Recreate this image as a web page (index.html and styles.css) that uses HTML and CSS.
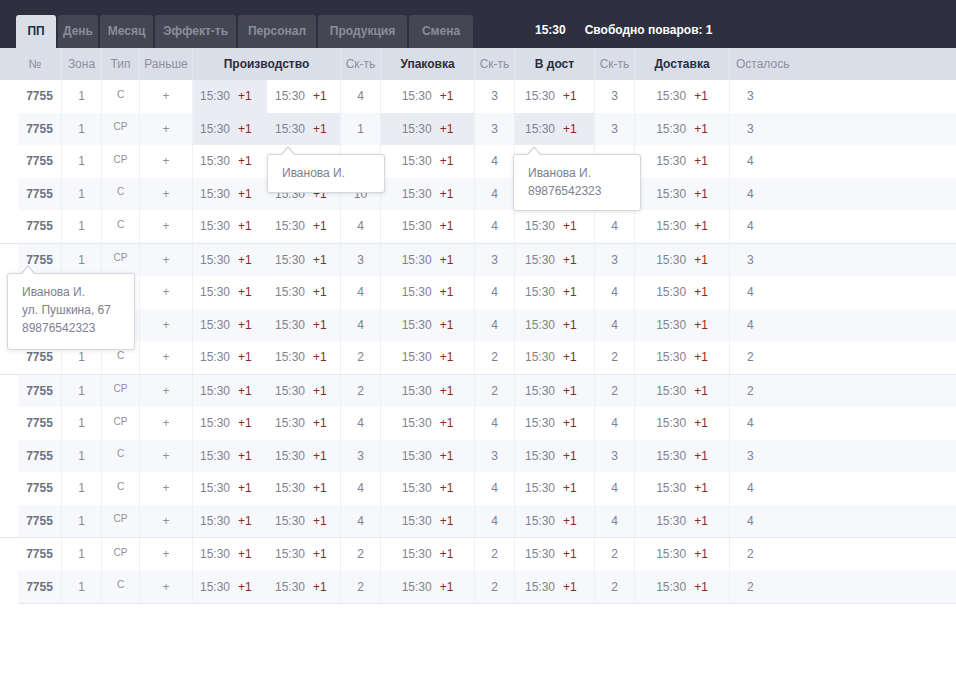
FILE: index.html
```html
<!DOCTYPE html>
<html lang="ru">
<head>
<meta charset="utf-8">
<title>ПП</title>
<link rel="stylesheet" href="styles.css">
</head>
<body>
<header class="topbar">
  <nav class="tabs">
    <div class="tab active">ПП</div>
    <div class="tab">День</div>
    <div class="tab">Месяц</div>
    <div class="tab">Эффект-ть</div>
    <div class="tab">Персонал</div>
    <div class="tab">Продукция</div>
    <div class="tab">Смена</div>
  </nav>
  <div class="status"><span>15:30</span><span>Свободно поваров: 1</span></div>
</header>

<div class="head grid">
  <div class="h first">№</div>
  <div class="h">Зона</div>
  <div class="h">Тип</div>
  <div class="h">Раньше</div>
  <div class="h b span2">Производство</div>
  <div class="h">Ск-ть</div>
  <div class="h b">Упаковка</div>
  <div class="h">Ск-ть</div>
  <div class="h b">В дост</div>
  <div class="h">Ск-ть</div>
  <div class="h b">Доставка</div>
  <div class="h last">Осталось</div>
</div>

<div class="body">
  <div class="group">
    <div class="row grid">
      <div class="cell num">7755</div><div class="cell zone">1</div><div class="cell type">С</div><div class="cell plus">+</div>
      <div class="cell p1 hl"><span class="tm">15:30</span><span class="pl">+1</span></div>
      <div class="cell p2"><span class="tm">15:30</span><span class="pl">+1</span></div>
      <div class="cell sk">4</div>
      <div class="cell pack"><span class="tm">15:30</span><span class="pl">+1</span></div>
      <div class="cell sk">3</div>
      <div class="cell dost"><span class="tm">15:30</span><span class="pl">+1</span></div>
      <div class="cell sk">3</div>
      <div class="cell deliv"><span class="tm">15:30</span><span class="pl">+1</span></div>
      <div class="cell left">3</div>
    </div>
    <div class="row grid s">
      <div class="cell num">7755</div><div class="cell zone">1</div><div class="cell type">СР</div><div class="cell plus">+</div>
      <div class="cell p1 hl"><span class="tm">15:30</span><span class="pl">+1</span></div>
      <div class="cell p2 hl"><span class="tm">15:30</span><span class="pl">+1</span></div>
      <div class="cell sk">1</div>
      <div class="cell pack hl"><span class="tm">15:30</span><span class="pl">+1</span></div>
      <div class="cell sk">3</div>
      <div class="cell dost hl"><span class="tm">15:30</span><span class="pl">+1</span></div>
      <div class="cell sk">3</div>
      <div class="cell deliv"><span class="tm">15:30</span><span class="pl">+1</span></div>
      <div class="cell left">3</div>
    </div>
    <div class="row grid">
      <div class="cell num">7755</div><div class="cell zone">1</div><div class="cell type">СР</div><div class="cell plus">+</div>
      <div class="cell p1"><span class="tm">15:30</span><span class="pl">+1</span></div>
      <div class="cell p2"><span class="tm">15:30</span><span class="pl">+1</span></div>
      <div class="cell sk">4</div>
      <div class="cell pack"><span class="tm">15:30</span><span class="pl">+1</span></div>
      <div class="cell sk">4</div>
      <div class="cell dost"><span class="tm">15:30</span><span class="pl">+1</span></div>
      <div class="cell sk">4</div>
      <div class="cell deliv"><span class="tm">15:30</span><span class="pl">+1</span></div>
      <div class="cell left">4</div>
    </div>
    <div class="row grid s">
      <div class="cell num">7755</div><div class="cell zone">1</div><div class="cell type">С</div><div class="cell plus">+</div>
      <div class="cell p1"><span class="tm">15:30</span><span class="pl">+1</span></div>
      <div class="cell p2"><span class="tm">15:30</span><span class="pl">+1</span></div>
      <div class="cell sk">10</div>
      <div class="cell pack"><span class="tm">15:30</span><span class="pl">+1</span></div>
      <div class="cell sk">4</div>
      <div class="cell dost"><span class="tm">15:30</span><span class="pl">+1</span></div>
      <div class="cell sk">4</div>
      <div class="cell deliv"><span class="tm">15:30</span><span class="pl">+1</span></div>
      <div class="cell left">4</div>
    </div>
    <div class="row grid">
      <div class="cell num">7755</div><div class="cell zone">1</div><div class="cell type">С</div><div class="cell plus">+</div>
      <div class="cell p1"><span class="tm">15:30</span><span class="pl">+1</span></div>
      <div class="cell p2"><span class="tm">15:30</span><span class="pl">+1</span></div>
      <div class="cell sk">4</div>
      <div class="cell pack"><span class="tm">15:30</span><span class="pl">+1</span></div>
      <div class="cell sk">4</div>
      <div class="cell dost"><span class="tm">15:30</span><span class="pl">+1</span></div>
      <div class="cell sk">4</div>
      <div class="cell deliv"><span class="tm">15:30</span><span class="pl">+1</span></div>
      <div class="cell left">4</div>
    </div>
  </div>

  <div class="group">
    <div class="row grid s">
      <div class="cell num">7755</div><div class="cell zone">1</div><div class="cell type">СР</div><div class="cell plus">+</div>
      <div class="cell p1"><span class="tm">15:30</span><span class="pl">+1</span></div>
      <div class="cell p2"><span class="tm">15:30</span><span class="pl">+1</span></div>
      <div class="cell sk">3</div>
      <div class="cell pack"><span class="tm">15:30</span><span class="pl">+1</span></div>
      <div class="cell sk">3</div>
      <div class="cell dost"><span class="tm">15:30</span><span class="pl">+1</span></div>
      <div class="cell sk">3</div>
      <div class="cell deliv"><span class="tm">15:30</span><span class="pl">+1</span></div>
      <div class="cell left">3</div>
    </div>
    <div class="row grid">
      <div class="cell num">7755</div><div class="cell zone">1</div><div class="cell type">СР</div><div class="cell plus">+</div>
      <div class="cell p1"><span class="tm">15:30</span><span class="pl">+1</span></div>
      <div class="cell p2"><span class="tm">15:30</span><span class="pl">+1</span></div>
      <div class="cell sk">4</div>
      <div class="cell pack"><span class="tm">15:30</span><span class="pl">+1</span></div>
      <div class="cell sk">4</div>
      <div class="cell dost"><span class="tm">15:30</span><span class="pl">+1</span></div>
      <div class="cell sk">4</div>
      <div class="cell deliv"><span class="tm">15:30</span><span class="pl">+1</span></div>
      <div class="cell left">4</div>
    </div>
    <div class="row grid s">
      <div class="cell num">7755</div><div class="cell zone">1</div><div class="cell type">С</div><div class="cell plus">+</div>
      <div class="cell p1"><span class="tm">15:30</span><span class="pl">+1</span></div>
      <div class="cell p2"><span class="tm">15:30</span><span class="pl">+1</span></div>
      <div class="cell sk">4</div>
      <div class="cell pack"><span class="tm">15:30</span><span class="pl">+1</span></div>
      <div class="cell sk">4</div>
      <div class="cell dost"><span class="tm">15:30</span><span class="pl">+1</span></div>
      <div class="cell sk">4</div>
      <div class="cell deliv"><span class="tm">15:30</span><span class="pl">+1</span></div>
      <div class="cell left">4</div>
    </div>
    <div class="row grid">
      <div class="cell num">7755</div><div class="cell zone">1</div><div class="cell type">С</div><div class="cell plus">+</div>
      <div class="cell p1"><span class="tm">15:30</span><span class="pl">+1</span></div>
      <div class="cell p2"><span class="tm">15:30</span><span class="pl">+1</span></div>
      <div class="cell sk">2</div>
      <div class="cell pack"><span class="tm">15:30</span><span class="pl">+1</span></div>
      <div class="cell sk">2</div>
      <div class="cell dost"><span class="tm">15:30</span><span class="pl">+1</span></div>
      <div class="cell sk">2</div>
      <div class="cell deliv"><span class="tm">15:30</span><span class="pl">+1</span></div>
      <div class="cell left">2</div>
    </div>
  </div>

  <div class="group">
    <div class="row grid s">
      <div class="cell num">7755</div><div class="cell zone">1</div><div class="cell type">СР</div><div class="cell plus">+</div>
      <div class="cell p1"><span class="tm">15:30</span><span class="pl">+1</span></div>
      <div class="cell p2"><span class="tm">15:30</span><span class="pl">+1</span></div>
      <div class="cell sk">2</div>
      <div class="cell pack"><span class="tm">15:30</span><span class="pl">+1</span></div>
      <div class="cell sk">2</div>
      <div class="cell dost"><span class="tm">15:30</span><span class="pl">+1</span></div>
      <div class="cell sk">2</div>
      <div class="cell deliv"><span class="tm">15:30</span><span class="pl">+1</span></div>
      <div class="cell left">2</div>
    </div>
    <div class="row grid">
      <div class="cell num">7755</div><div class="cell zone">1</div><div class="cell type">СР</div><div class="cell plus">+</div>
      <div class="cell p1"><span class="tm">15:30</span><span class="pl">+1</span></div>
      <div class="cell p2"><span class="tm">15:30</span><span class="pl">+1</span></div>
      <div class="cell sk">4</div>
      <div class="cell pack"><span class="tm">15:30</span><span class="pl">+1</span></div>
      <div class="cell sk">4</div>
      <div class="cell dost"><span class="tm">15:30</span><span class="pl">+1</span></div>
      <div class="cell sk">4</div>
      <div class="cell deliv"><span class="tm">15:30</span><span class="pl">+1</span></div>
      <div class="cell left">4</div>
    </div>
    <div class="row grid s">
      <div class="cell num">7755</div><div class="cell zone">1</div><div class="cell type">С</div><div class="cell plus">+</div>
      <div class="cell p1"><span class="tm">15:30</span><span class="pl">+1</span></div>
      <div class="cell p2"><span class="tm">15:30</span><span class="pl">+1</span></div>
      <div class="cell sk">3</div>
      <div class="cell pack"><span class="tm">15:30</span><span class="pl">+1</span></div>
      <div class="cell sk">3</div>
      <div class="cell dost"><span class="tm">15:30</span><span class="pl">+1</span></div>
      <div class="cell sk">3</div>
      <div class="cell deliv"><span class="tm">15:30</span><span class="pl">+1</span></div>
      <div class="cell left">3</div>
    </div>
    <div class="row grid">
      <div class="cell num">7755</div><div class="cell zone">1</div><div class="cell type">С</div><div class="cell plus">+</div>
      <div class="cell p1"><span class="tm">15:30</span><span class="pl">+1</span></div>
      <div class="cell p2"><span class="tm">15:30</span><span class="pl">+1</span></div>
      <div class="cell sk">4</div>
      <div class="cell pack"><span class="tm">15:30</span><span class="pl">+1</span></div>
      <div class="cell sk">4</div>
      <div class="cell dost"><span class="tm">15:30</span><span class="pl">+1</span></div>
      <div class="cell sk">4</div>
      <div class="cell deliv"><span class="tm">15:30</span><span class="pl">+1</span></div>
      <div class="cell left">4</div>
    </div>
    <div class="row grid s">
      <div class="cell num">7755</div><div class="cell zone">1</div><div class="cell type">СР</div><div class="cell plus">+</div>
      <div class="cell p1"><span class="tm">15:30</span><span class="pl">+1</span></div>
      <div class="cell p2"><span class="tm">15:30</span><span class="pl">+1</span></div>
      <div class="cell sk">4</div>
      <div class="cell pack"><span class="tm">15:30</span><span class="pl">+1</span></div>
      <div class="cell sk">4</div>
      <div class="cell dost"><span class="tm">15:30</span><span class="pl">+1</span></div>
      <div class="cell sk">4</div>
      <div class="cell deliv"><span class="tm">15:30</span><span class="pl">+1</span></div>
      <div class="cell left">4</div>
    </div>
  </div>

  <div class="group final">
    <div class="row grid">
      <div class="cell num">7755</div><div class="cell zone">1</div><div class="cell type">СР</div><div class="cell plus">+</div>
      <div class="cell p1"><span class="tm">15:30</span><span class="pl">+1</span></div>
      <div class="cell p2"><span class="tm">15:30</span><span class="pl">+1</span></div>
      <div class="cell sk">2</div>
      <div class="cell pack"><span class="tm">15:30</span><span class="pl">+1</span></div>
      <div class="cell sk">2</div>
      <div class="cell dost"><span class="tm">15:30</span><span class="pl">+1</span></div>
      <div class="cell sk">2</div>
      <div class="cell deliv"><span class="tm">15:30</span><span class="pl">+1</span></div>
      <div class="cell left">2</div>
    </div>
    <div class="row grid s">
      <div class="cell num">7755</div><div class="cell zone">1</div><div class="cell type">С</div><div class="cell plus">+</div>
      <div class="cell p1"><span class="tm">15:30</span><span class="pl">+1</span></div>
      <div class="cell p2"><span class="tm">15:30</span><span class="pl">+1</span></div>
      <div class="cell sk">2</div>
      <div class="cell pack"><span class="tm">15:30</span><span class="pl">+1</span></div>
      <div class="cell sk">2</div>
      <div class="cell dost"><span class="tm">15:30</span><span class="pl">+1</span></div>
      <div class="cell sk">2</div>
      <div class="cell deliv"><span class="tm">15:30</span><span class="pl">+1</span></div>
      <div class="cell left">2</div>
    </div>
  </div>

  <div class="tip tip-a">Иванова И.</div>
  <div class="tip tip-b">Иванова И.<br>89876542323</div>
  <div class="tip tip-c">Иванова И.<br>ул. Пушкина, 67<br>89876542323</div>
</div>
</body>
</html>
```

FILE: styles.css
```css
* { box-sizing: border-box; }

body {
  margin: 0;
  width: 956px;
  font-family: "Liberation Sans", Arial, Helvetica, sans-serif;
  font-size: 12px;
  background: #ffffff;
  color: #7d8190;
}

/* top bar */
.topbar {
  height: 48px;
  background: #2e3040;
  display: flex;
  align-items: flex-end;
  padding-left: 16px;
}
.tabs { display: flex; gap: 2px; }
.tab {
  height: 33px;
  padding-bottom: 2px;
  display: flex;
  align-items: center;
  justify-content: center;
  background: #444654;
  color: #8a8d9b;
  font-weight: bold;
  border-radius: 3px 3px 0 0;
}
.tab:nth-child(1) { width: 40px; }
.tab:nth-child(2) { width: 40px; }
.tab:nth-child(3) { width: 53px; }
.tab:nth-child(4) { width: 81px; }
.tab:nth-child(5) { width: 78px; }
.tab:nth-child(6) { width: 89px; }
.tab:nth-child(7) { width: 64px; }
.tab.active { background: #d9dee8; color: #2b2d3a; }

.status {
  height: 33px;
  padding-bottom: 3px;
  margin-left: 62px;
  display: flex;
  align-items: center;
  gap: 19px;
  color: #ffffff;
  font-weight: bold;
}

/* grid columns */
.grid {
  display: grid;
  grid-template-columns: 44px 40px 38px 53px 74px 74px 40px 94px 40px 80px 40px 95px 1fr;
}

/* header row */
.head {
  height: 32px;
  background: #d9dee8;
  padding-left: 18px;
}
.head .h {
  display: flex;
  align-items: center;
  justify-content: center;
  border-right: 1px solid #e3e7ef;
  color: #8d909e;
}
.head .h.first { padding-right: 9px; }
.head .h.b { font-weight: bold; color: #2b2d3a; }
.head .span2 { grid-column: span 2; }
.head .h.last { justify-content: flex-start; padding-left: 6px; border-right: none; }

/* body */
.body { position: relative; }
.group {
  padding-left: 18px;
  border-bottom: 1px solid #e3e7ee;
}
.group.final { margin-left: 18px; padding-left: 0; }
.row { height: 32.5px; }
.row.s { background: #f7f8fb; }

.cell {
  display: flex;
  align-items: center;
  justify-content: center;
  border-right: 1px solid #eef0f4;
  color: #7d8190;
  white-space: nowrap;
}
.cell.num { font-weight: bold; color: #6d7182; }
.cell.zone { color: #858998; }
.cell.type { font-size: 10px; padding-bottom: 4px; color: #8d909e; }
.cell.plus { color: #8d909e; }
.cell.p1 { justify-content: flex-start; padding-left: 7px; border-right: none; }
.cell.p2 { justify-content: flex-start; padding-left: 8px; }
.cell.dost { justify-content: flex-start; padding-left: 10px; }
.cell.left { justify-content: flex-start; padding-left: 17px; border-right: none; }
.cell.hl { background: #e9ecf3; }

.tm { color: #80838f; }
.pl { color: #8b2a1e; margin-left: 8px; }

/* tooltips */
.tip {
  position: absolute;
  background: #ffffff;
  border: 1px solid #d3d7de;
  border-radius: 3px;
  box-shadow: 0 1px 4px rgba(40, 45, 60, 0.12);
  padding: 9px 14px 10px;
  line-height: 18px;
  color: #7d8190;
  font-size: 12px;
  white-space: nowrap;
}
.tip::before,
.tip::after {
  content: "";
  position: absolute;
  width: 0;
  height: 0;
  border-style: solid;
  border-color: transparent;
}
.tip::before {
  left: 13px;
  top: -9px;
  border-width: 0 7px 8px 7px;
  border-bottom-color: #d3d7de;
}
.tip::after {
  left: 14px;
  top: -7px;
  border-width: 0 6px 7px 6px;
  border-bottom-color: #ffffff;
}
.tip-a { top: 74px; left: 267px; width: 118px; }
.tip-b { top: 74px; left: 513px; width: 128px; }
.tip-c { top: 193px; left: 7px; width: 128px; padding-bottom: 12px; }
```
